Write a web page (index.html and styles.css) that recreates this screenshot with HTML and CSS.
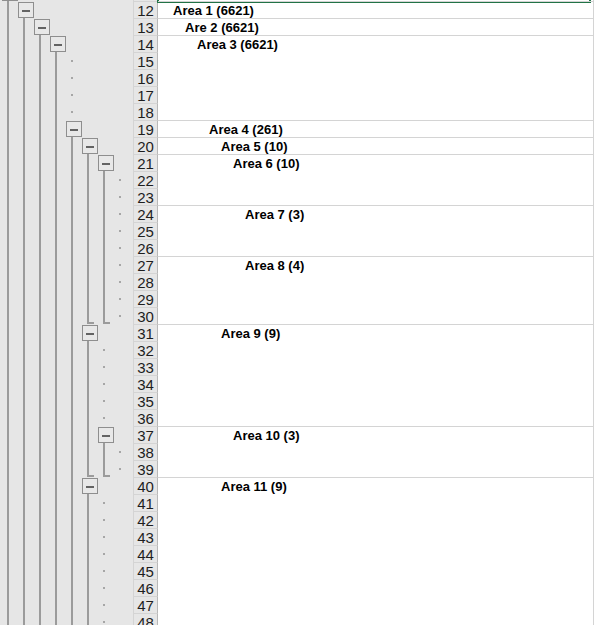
FILE: index.html
```html
<!DOCTYPE html>
<html lang="en">
<head>
    <meta charset="UTF-8">
    <meta name="viewport" content="width=device-width, initial-scale=1.0">
    <title>Areas</title>
    <link rel="stylesheet" href="styles.css">
</head>
<body>

    <!-- Outline bar, row numbers and column A -->
    <div class="sheet" id="sheet"></div>

    <script>
        // | = group line, b = collapse box, . = detail dot, L = end of group
        const rows = [
            [11, "b"],
            [12, "|b", "Area 1 (6621)", 1],
            [13, "||b", "Are 2 (6621)", 2],
            [14, "|||b", "Area 3 (6621)", 3],
            [15, "||||."], [16, "||||."], [17, "||||."], [18, "||||."],
            [19, "||||b", "Area 4 (261)", 4],
            [20, "|||||b", "Area 5 (10)", 5],
            [21, "||||||b", "Area 6 (10)", 6],
            [22, "|||||||."], [23, "|||||||."],
            [24, "|||||||.", "Area 7 (3)", 7],
            [25, "|||||||."], [26, "|||||||."],
            [27, "|||||||.", "Area 8 (4)", 7],
            [28, "|||||||."], [29, "|||||||."],
            [30, "|||||LL."],
            [31, "|||||b", "Area 9 (9)", 5],
            [32, "||||||."], [33, "||||||."], [34, "||||||."], [35, "||||||."], [36, "||||||."],
            [37, "||||||b", "Area 10 (3)", 6],
            [38, "|||||||."],
            [39, "|||||LL."],
            [40, "|||||b", "Area 11 (9)", 5],
            [41, "||||||."], [42, "||||||."], [43, "||||||."], [44, "||||||."],
            [45, "||||||."], [46, "||||||."], [47, "||||||."], [48, "||||||."]
        ];

        const kinds = { "|": "line", "b": "box", ".": "dot", "L": "end", " ": "" };
        const sheet = document.getElementById("sheet");

        rows.forEach(([num, marks, label, indent]) => {
            let gutter = "";
            for (let i = 0; i < 8; i++) {
                gutter += `<span class="lvl ${kinds[marks[i] || " "]}"></span>`;
            }

            let cell = "";
            let cellClass = "cell";
            if (label) {
                cellClass += " ruled";
                cell = `<span class="indent-${indent}">${label}</span>`;
            }
            if (num === 11) {
                // row 11 is scrolled almost out of view, only its selected cell edge shows
                cell = `<div class="selection"></div>`;
            }

            const row = document.createElement("div");
            row.className = "row";
            row.innerHTML = `<div class="gutter">${gutter}</div>` +
                `<div class="num">${num === 11 ? "" : num}</div>` +
                `<div class="${cellClass}">${cell}</div>`;
            sheet.appendChild(row);
        });
    </script>

</body>
</html>
```

FILE: styles.css
```css
body {
    margin: 0;
    background-color: #fff;
    font-family: "Liberation Sans", Arial, sans-serif;
    overflow: hidden;
}
.sheet {
    margin-top: -16px;
}
.row {
    display: flex;
    height: 17px;
}

/* outline bar */
.gutter {
    width: 133px;
    padding-left: 2px;
    box-sizing: border-box;
    background-color: #e6e6e6;
    display: flex;
}
.lvl {
    width: 16px;
    height: 17px;
    position: relative;
    flex-shrink: 0;
}
.lvl.line::before,
.lvl.end::before {
    content: "";
    position: absolute;
    left: 5px;
    top: 0;
    bottom: 0;
    width: 2px;
    background-color: #9b9b9b;
}
.lvl.end::after {
    content: "";
    position: absolute;
    left: 5px;
    bottom: 0;
    width: 7px;
    height: 2px;
    background-color: #9b9b9b;
}
.lvl.box::before {
    content: "";
    position: absolute;
    left: 0;
    top: 1px;
    width: 16px;
    height: 16px;
    box-sizing: border-box;
    border: 1px solid #8e8e8e;
    background-color: #e8e8e8;
}
.lvl.box::after {
    content: "";
    position: absolute;
    left: 4px;
    top: 9px;
    width: 8px;
    height: 2px;
    background-color: #636363;
}
.lvl.dot::before {
    content: "";
    position: absolute;
    left: 5px;
    top: 8px;
    width: 2px;
    height: 2px;
    background-color: #a6a6a6;
}

/* row headers */
.num {
    width: 25px;
    box-sizing: border-box;
    border-left: 1px solid #d4d4d4;
    border-right: 1px solid #b8b8b8;
    border-top: 1px solid #d4d4d4;
    background-color: #e6e6e6;
    color: #1e1e1e;
    font-size: 15px;
    line-height: 17px;
    text-align: center;
}

/* column A */
.cell {
    flex: 1;
    margin-right: 1px;
    border-right: 1px solid #d4d4d4;
    box-sizing: border-box;
    position: relative;
    padding-left: 3px;
    font-size: 13px;
    font-weight: bold;
    line-height: 18px;
    color: #000;
    white-space: nowrap;
}
.cell.ruled {
    border-top: 1px solid #d4d4d4;
}
.selection {
    position: absolute;
    left: -1px;
    right: 2px;
    top: -2px;
    bottom: -2px;
    border: 2px solid #217346;
}
.indent-1 { padding-left: 12px; }
.indent-2 { padding-left: 24px; }
.indent-3 { padding-left: 36px; }
.indent-4 { padding-left: 48px; }
.indent-5 { padding-left: 60px; }
.indent-6 { padding-left: 72px; }
.indent-7 { padding-left: 84px; }
```
